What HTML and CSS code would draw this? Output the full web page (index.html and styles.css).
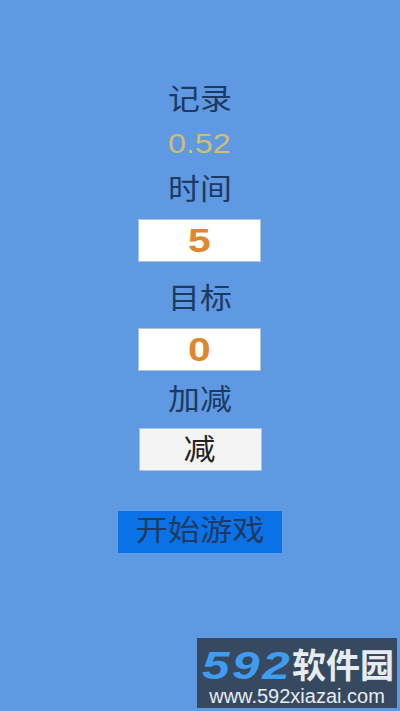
FILE: index.html
```html
<!DOCTYPE html>
<html lang="zh-CN">
<head>
    <meta charset="UTF-8">
    <meta name="viewport" content="width=device-width, initial-scale=1.0">
    <title>记录</title>
    <link rel="stylesheet" href="styles.css">
</head>
<body>
    <div class="game">
        <div class="label">记录</div>
        <div class="record"><span>0.52</span></div>
        <div class="label time-label">时间</div>
        <div class="field"><span>5</span></div>
        <div class="label target-label">目标</div>
        <div class="field"><span>0</span></div>
        <div class="label op-label">加减</div>
        <div class="toggle"><span>减</span></div>
        <div class="start"><span>开始游戏</span></div>
    </div>

    <div class="watermark">
        <div class="wm-logo">
            <span class="wm-num">592</span>
            <span class="wm-name">软件园</span>
        </div>
        <div class="wm-url">www.592xiazai.com</div>
    </div>
</body>
</html>
```

FILE: styles.css
```css
* {
    margin: 0;
    padding: 0;
    box-sizing: border-box;
}

body {
    width: 400px;
    height: 711px;
    overflow: hidden;
    position: relative;
    background: #5e99e2;
    font-family: "Liberation Sans", "Noto Sans CJK SC", sans-serif;
}

.game {
    display: flex;
    flex-direction: column;
    align-items: center;
    padding-top: 82px;
}

.label {
    height: 36px;
    line-height: 36px;
    font-size: 29px;
    color: #1d3a63;
    transform: scaleX(1.1);
}

.time-label {
    margin-top: 10px;
}

.target-label {
    margin-top: 19px;
}

.op-label {
    margin-top: 11px;
}

.record {
    height: 36px;
    margin: 8px 1px 0 0;
    line-height: 36px;
    font-size: 28px;
    color: #d3bf6b;
}

.record span {
    display: block;
    transform: scaleX(1.15);
}

.field {
    width: 123px;
    height: 43px;
    margin: 11px 2px 0 0;
    background: #fff;
    border: 1px solid #a9c3e2;
    text-align: center;
    line-height: 41px;
    font-size: 34px;
    font-weight: bold;
    color: #dd872e;
}

.field span {
    display: inline-block;
    transform: scaleX(1.2);
}

.toggle {
    width: 123px;
    height: 43px;
    margin-top: 10px;
    background: #f4f4f4;
    border: 1px solid #a9c3e2;
    text-align: center;
    line-height: 42px;
    font-size: 29px;
    color: #222;
}

.toggle span {
    display: inline-block;
    transform: scaleX(1.1);
}

.start {
    width: 164px;
    height: 42px;
    margin-top: 40px;
    background: #0a72e6;
    text-align: center;
    line-height: 40px;
    font-size: 29px;
    color: #1d3a63;
}

.start span {
    display: inline-block;
    transform: scaleX(1.11);
}

.watermark {
    position: absolute;
    left: 197px;
    top: 638px;
    width: 200px;
    height: 70px;
    background: #37495f;
}

.wm-logo {
    display: flex;
    align-items: center;
    height: 50px;
    padding: 6px 0 0 5px;
}

.wm-num {
    width: 90px;
    font-size: 38px;
    line-height: 38px;
    font-weight: bold;
    font-style: italic;
    letter-spacing: 2px;
    color: #3f9cf0;
    transform: scaleX(1.3);
    transform-origin: left center;
}

.wm-name {
    font-size: 34px;
    line-height: 38px;
    font-weight: bold;
    color: #e6ecf2;
    white-space: nowrap;
}

.wm-url {
    text-align: center;
    font-size: 20px;
    line-height: 16px;
    color: #e6ecf2;
}
```
